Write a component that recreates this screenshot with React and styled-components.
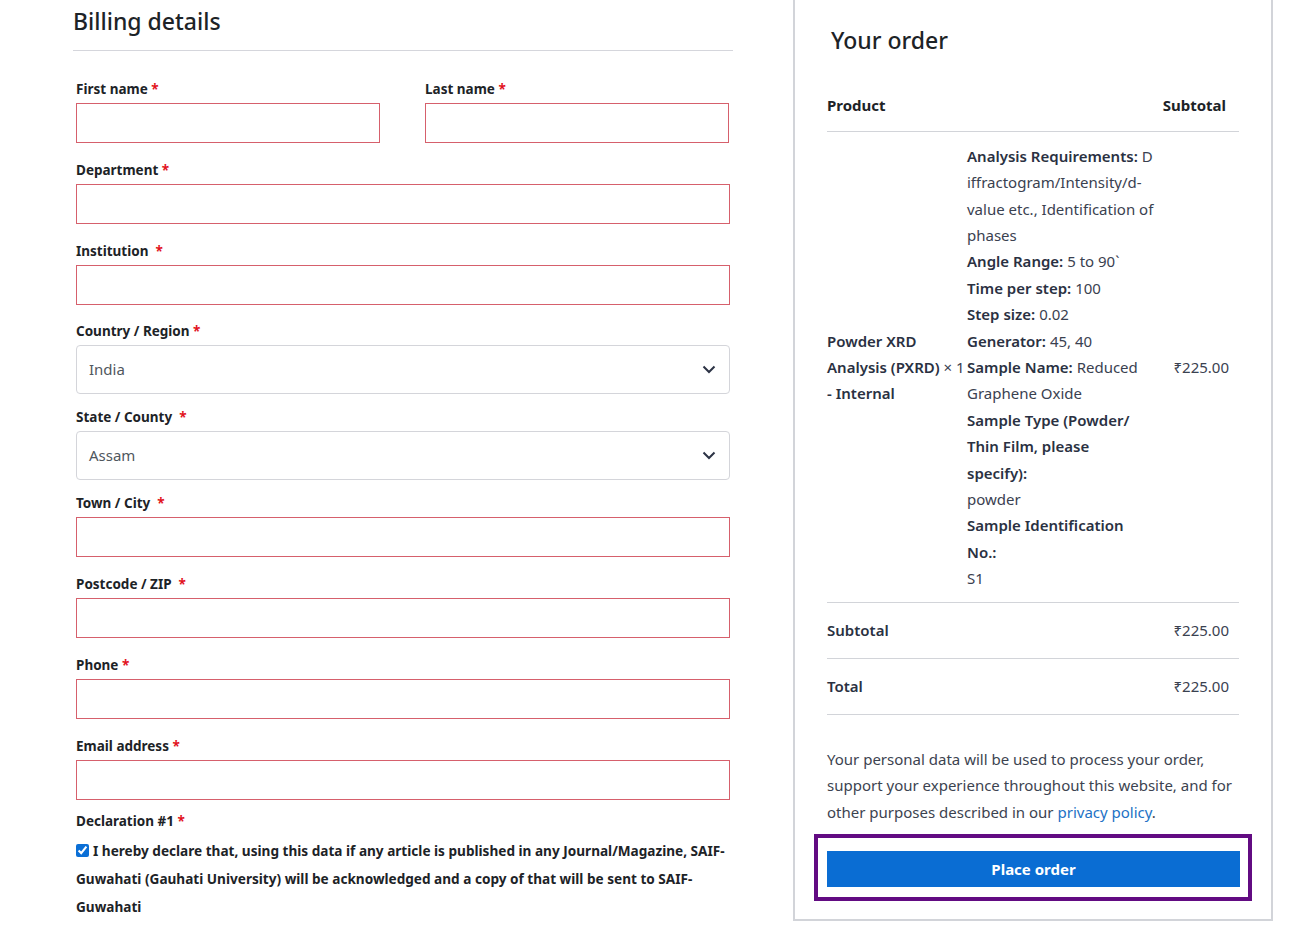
import React from 'react'
import styled, {createGlobalStyle} from 'styled-components'

// ====================== GLOBAL ======================
const GlobalStyle = createGlobalStyle`
  body {
    margin: 0;
    background: #fff;
    font-family: 'Noto Sans', 'Open Sans', sans-serif;
    color: #2c3338;
  }
`

// ====================== LAYOUT ======================
const Page = styled.div`
  display: flex;
  align-items: flex-start;
  gap: 60px;
  padding-left: 73px;
  width: 1312px;
  height: 926px;
  box-sizing: border-box;
  overflow: hidden;
`

const BillingColumn = styled.section`
  width: 660px;
  padding-top: 7px;
`

const Heading = styled.h3`
  margin: 0;
  font-size: 23px;
  font-weight: 500;
  line-height: 28.8px;
  color: #1d2327;
`

const BillingHeading = styled(Heading)`
  padding-bottom: 14px;
  border-bottom: 1px solid #d5d6dc;
  margin-bottom: 28px;
`

const Fields = styled.div`
  display: flex;
  flex-wrap: wrap;
  column-gap: 45px;
  padding: 0 3px;
`

const Field = styled.div`
  width: ${(p) => (p.half ? '304px' : '100%')};
  margin-bottom: ${(p) => p.gap || '17px'};
`

const Label = styled.label`
  display: block;
  font-size: 13.5px;
  font-weight: 700;
  line-height: 20px;
  margin-bottom: 4px;
  color: #1d2327;
  white-space: pre;
`

const Star = styled.span`
  color: #e2141e;
`

const TextInput = styled.input`
  display: block;
  width: 100%;
  height: 40px;
  box-sizing: border-box;
  border: 1px solid #d6606c;
  border-radius: 0;
  background: #fff;
  outline: none;
`

const SelectBox = styled.div`
  display: flex;
  align-items: center;
  justify-content: space-between;
  height: 49px;
  box-sizing: border-box;
  padding: 0 13px 0 12px;
  border: 1px solid #d4d5da;
  border-radius: 4px;
  font-size: 15px;
  color: #50575e;
`

const Declaration = styled.div`
  width: 100%;
`

const CheckLine = styled.label`
  display: block;
  margin-top: 6px;
  font-size: 13.6px;
  font-weight: 700;
  line-height: 28px;
  color: #1d2327;

  input {
    margin: 0 4px 0 0;
    width: 13px;
    height: 13px;
    vertical-align: -1px;
    accent-color: #0b6fd6;
  }
`

// ====================== ORDER PANEL ======================
const OrderBox = styled.aside`
  width: 480px;
  box-sizing: border-box;
  border: 2px solid #d2d4d9;
  border-top: none;
  padding: 26px 32px 18px;
`

const OrderHeading = styled(Heading)`
  padding-left: 4px;
`

const Row = styled.div`
  display: grid;
  grid-template-columns: ${(p) => (p.product ? '140px 1fr auto' : '1fr auto')};
  align-items: center;
  padding: ${(p) => p.pad || '14.5px 10px 14.5px 0'};
  border-bottom: 1px solid #d2d4d9;
  font-size: 15px;
  line-height: ${(p) => (p.product ? '26.4px' : '26px')};
  color: #3a4150;
`

const HeadRow = styled(Row)`
  margin-top: 23px;
  padding: 14px 13px 13px 0;
  font-weight: 700;
  color: #1d2327;
`

const Strong = styled.span`
  font-weight: 600;
  color: #2a3142;
`

const Qty = styled.span`
  font-weight: 400;
  color: #3a4150;
`

const Meta = styled.div`
  padding-right: 10px;
`

const Line = styled.div`
  white-space: nowrap;
`

const Notice = styled.p`
  margin: 31px 0 9px;
  font-size: 15px;
  line-height: 26.4px;
  color: #3c4350;

  a {
    color: #2271c5;
    text-decoration: none;
  }
`

const Highlight = styled.div`
  border: 4px solid #620b82;
  margin: 0 -13px;
  padding: 13px 8px 10px 9px;
`

const PlaceButton = styled.button`
  display: block;
  width: 100%;
  height: 36px;
  border: none;
  background: #0a6dd3;
  color: #fff;
  font-family: inherit;
  font-size: 15px;
  font-weight: 700;
`

// ===============================================================

const Chevron = () => (
  <svg width="14" height="9" viewBox="0 0 14 9">
    <path d="M1.5 1.5l5.5 5.5 5.5-5.5" fill="none" stroke="#2c3345" strokeWidth="2" />
  </svg>
)

const InputField = ({label, wide, half, gap}) => (
  <Field half={half} gap={gap}>
    <Label>
      {label}
      {wide ? '  ' : ' '}
      <Star>*</Star>
    </Label>
    <TextInput type="text" />
  </Field>
)

const SelectField = ({label, value, wide}) => (
  <Field gap="13px">
    <Label>
      {label}
      {wide ? '  ' : ' '}
      <Star>*</Star>
    </Label>
    <SelectBox>
      <span>{value}</span>
      <Chevron />
    </SelectBox>
  </Field>
)

const meta = [
  [<Strong key="a">Analysis Requirements:</Strong>, ' D'],
  ['iffractogram/Intensity/d-'],
  ['value etc., Identification of'],
  ['phases'],
  [<Strong key="b">Angle Range:</Strong>, ' 5 to 90`'],
  [<Strong key="c">Time per step:</Strong>, ' 100'],
  [<Strong key="d">Step size:</Strong>, ' 0.02'],
  [<Strong key="e">Generator:</Strong>, ' 45, 40'],
  [<Strong key="f">Sample Name:</Strong>, ' Reduced'],
  ['Graphene Oxide'],
  [<Strong key="g">Sample Type (Powder/</Strong>],
  [<Strong key="h">Thin Film, please</Strong>],
  [<Strong key="i">specify):</Strong>],
  ['powder'],
  [<Strong key="j">Sample Identification</Strong>],
  [<Strong key="k">No.:</Strong>],
  ['S1'],
]

export default function App() {
  return (
    <>
      <GlobalStyle />
      <Page>
        <BillingColumn>
          <BillingHeading>Billing details</BillingHeading>
          <Fields>
            <InputField label="First name" half />
            <InputField label="Last name" half />
            <InputField label="Department" />
            <InputField label="Institution" wide gap="16px" />
            <SelectField label="Country / Region" value="India" />
            <SelectField label="State / County" value="Assam" wide />
            <InputField label="Town / City" wide />
            <InputField label="Postcode / ZIP" wide />
            <InputField label="Phone" />
            <InputField label="Email address" gap="11px" />
            <Declaration>
              <Label>
                Declaration #1 <Star>*</Star>
              </Label>
              <CheckLine>
                <input type="checkbox" defaultChecked />I hereby declare that, using this data if any
                article is published in any Journal/Magazine, SAIF-Guwahati (Gauhati University) will
                be acknowledged and a copy of that will be sent to SAIF-Guwahati
              </CheckLine>
            </Declaration>
          </Fields>
        </BillingColumn>

        <OrderBox>
          <OrderHeading>Your order</OrderHeading>
          <HeadRow>
            <span>Product</span>
            <span>Subtotal</span>
          </HeadRow>
          <Row product pad="11px 10px 10px 0">
            <div>
              <Strong>Powder XRD</Strong>
              <br />
              <Line>
                <Strong>Analysis (PXRD)</Strong> <Qty>× 1</Qty>
              </Line>
              <Strong>- Internal</Strong>
            </div>
            <Meta>
              {meta.map((parts, i) => (
                <Line key={i}>{parts}</Line>
              ))}
            </Meta>
            <span>₹225.00</span>
          </Row>
          <Row>
            <Strong>Subtotal</Strong>
            <span>₹225.00</span>
          </Row>
          <Row>
            <Strong>Total</Strong>
            <span>₹225.00</span>
          </Row>
          <Notice>
            Your personal data will be used to process your order, support your experience
            throughout this website, and for other purposes described in our{' '}
            <a href="#privacy">privacy policy</a>.
          </Notice>
          <Highlight>
            <PlaceButton type="button">Place order</PlaceButton>
          </Highlight>
        </OrderBox>
      </Page>
    </>
  )
}
